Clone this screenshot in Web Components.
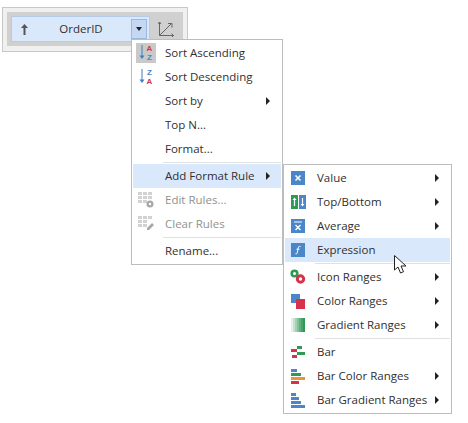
<!DOCTYPE html>
<html>
<head>
<meta charset="utf-8">
<title>Add Format Rule</title>
<style>
  html, body { margin: 0; height: 423px; background: #fff; overflow: hidden; }
  body { font: 11.5px "Open Sans", "Noto Sans", sans-serif; color: #303030; position: relative; }
  svg { display: block; }
</style>
</head>
<body>
<field-panel>OrderID</field-panel>

<popup-menu style="left:131px;top:39px;width:148px">
  <menu-row><svg slot="icon" width="20" height="20" viewBox="0 0 20 20"><rect width="20" height="20" fill="#c9c9c9"/><path d="M6 2v12" stroke="#3b7fc4" fill="none"/><path d="M3.500 12.500l2.500 3.500 2.500-3.500z" fill="#3b7fc4"/><text x="13.500" y="8" font-family="Liberation Sans" font-size="8" font-weight="700" fill="#d6334a" text-anchor="middle">A</text><text x="13.500" y="16.500" font-family="Liberation Sans" font-size="8" font-weight="700" fill="#4a86c8" text-anchor="middle">Z</text></svg>Sort Ascending</menu-row>
  <menu-row><svg slot="icon" width="20" height="20" viewBox="0 0 20 20"><path d="M6 2v12" stroke="#3b7fc4" fill="none"/><path d="M3.500 12.500l2.500 3.500 2.500-3.500z" fill="#3b7fc4"/><text x="13.500" y="8" font-family="Liberation Sans" font-size="8" font-weight="700" fill="#4a86c8" text-anchor="middle">Z</text><text x="13.500" y="16.500" font-family="Liberation Sans" font-size="8" font-weight="700" fill="#d6334a" text-anchor="middle">A</text></svg>Sort Descending</menu-row>
  <menu-row arrow>Sort by</menu-row>
  <menu-row>Top N...</menu-row>
  <menu-row>Format...</menu-row>
  <menu-sep></menu-sep>
  <menu-row arrow active>Add Format Rule</menu-row>
  <menu-row disabled><svg slot="icon" width="16" height="16" viewBox="0 0 16 16"><path d="M0 0h4v3H0zM5 0h4v3H5zM10 0h4v3h-4zM0 4h4v3H0zM5 4h4v3H5zM10 4h4v3h-4zM0 8h4v3H0zM5 8h4v3H5z" fill="#d2d2d2"/><circle cx="12" cy="12" r="3.500" fill="#a8a8a8"/><circle cx="12" cy="12" r="1.200" fill="#fff"/></svg>Edit Rules...</menu-row>
  <menu-row disabled><svg slot="icon" width="16" height="16" viewBox="0 0 16 16"><path d="M0 0h4v3H0zM5 0h4v3H5zM10 0h4v3h-4zM0 4h4v3H0zM5 4h4v3H5zM0 8h4v3H0zM5 8h4v3H5z" fill="#d2d2d2"/><path d="M9 12l5-5 2 2-5 5H9z" fill="#a8a8a8"/></svg>Clear Rules</menu-row>
  <menu-sep></menu-sep>
  <menu-row>Rename...</menu-row>
</popup-menu>

<popup-menu style="left:283px;top:164px;width:165px">
  <menu-row arrow><svg slot="icon" width="14" height="14" viewBox="0 0 14 14"><rect width="14" height="14" fill="#4a86c8"/><path d="M4.500 4.500l5 5M9.500 4.500l-5 5" stroke="#fff" stroke-width="1.500"/></svg>Value</menu-row>
  <menu-row arrow><svg slot="icon" width="15" height="14" viewBox="0 0 15 14"><rect width="7" height="14" fill="#2f9a55"/><rect x="8" width="7" height="14" fill="#4a86c8"/><path d="M3.500 11V4M11.500 3v7" stroke="#fff" stroke-width="1.200"/><path d="M1.500 5l2-2.500 2 2.500zM9.500 9l2 2.500 2-2.500z" fill="#fff"/></svg>Top/Bottom</menu-row>
  <menu-row arrow><svg slot="icon" width="14" height="14" viewBox="0 0 14 14"><rect width="14" height="14" fill="#4a86c8"/><path d="M3 3h8" stroke="#fff"/><path d="M4.500 6l5 5M9.500 6l-5 5" stroke="#fff" stroke-width="1.400"/></svg>Average</menu-row>
  <menu-row class="hot"><svg slot="icon" width="14" height="14" viewBox="0 0 14 14"><rect width="14" height="14" fill="#4a86c8"/><path d="M9.500 3.500C8 3 7.500 3.500 7.200 5L6.200 10c-.3 1-1 1-1.800.7M5.500 6.200h3" stroke="#fff" fill="none"/></svg>Expression</menu-row>
  <menu-sep></menu-sep>
  <menu-row arrow><svg slot="icon" width="16" height="16" viewBox="0 0 16 16"><circle cx="4.500" cy="4.500" r="2.800" fill="none" stroke="#2f9a55" stroke-width="2.600"/><circle cx="10.500" cy="10" r="3.200" fill="none" stroke="#d6334a" stroke-width="3"/></svg>Icon Ranges</menu-row>
  <menu-row arrow><svg slot="icon" width="14" height="15" viewBox="0 0 14 15"><rect width="9" height="9" fill="#4a86c8"/><rect x="5" y="5" width="9" height="10" fill="#d6334a"/></svg>Color Ranges</menu-row>
  <menu-row arrow><svg slot="icon" width="14" height="14" viewBox="0 0 14 14"><path d="M0 0h2v14H0z" fill="#e4f1e8"/><path d="M2 0h2v14H2z" fill="#c6e2cf"/><path d="M4 0h2v14H4z" fill="#a4d1b3"/><path d="M6 0h2v14H6z" fill="#84c09a"/><path d="M8 0h2v14H8z" fill="#62b07e"/><path d="M10 0h2v14h-2z" fill="#46a268"/><path d="M12 0h2v14h-2z" fill="#2f9a55"/></svg>Gradient Ranges</menu-row>
  <menu-sep></menu-sep>
  <menu-row><svg slot="icon" width="14" height="13" viewBox="0 0 14 13"><rect x="6" width="5" height="3" fill="#2f9a55"/><rect y="3" width="6" height="3" fill="#d6334a"/><rect x="6" y="6" width="8" height="3" fill="#2f9a55"/><rect x="1" y="9" width="5" height="3" fill="#d6334a"/></svg>Bar</menu-row>
  <menu-row arrow><svg slot="icon" width="14" height="15" viewBox="0 0 14 15"><rect width="6" height="3" fill="#4a86c8"/><rect y="4" width="10" height="3" fill="#2f9a55"/><rect y="8" width="14" height="3" fill="#ec9434"/><rect y="12" width="8" height="3" fill="#d6334a"/></svg>Bar Color Ranges</menu-row>
  <menu-row arrow><svg slot="icon" width="14" height="15" viewBox="0 0 14 15"><rect width="5" height="3" fill="#4a86c8"/><rect y="4" width="8" height="3" fill="#4a86c8"/><rect y="8" width="10" height="3" fill="#4a86c8"/><rect y="12" width="14" height="3" fill="#4a86c8"/></svg>Bar Gradient Ranges</menu-row>
</popup-menu>

<mouse-pointer></mouse-pointer>

<script>
class FieldPanel extends HTMLElement {
  constructor() {
    super()
    this.attachShadow({ mode: "open" })
    this.shadowRoot.innerHTML = `
      <style>
        :host { display: block; width: 186px; height: 45px; margin: 7px 0 0 2px; box-sizing: border-box;
                border: 1px solid #c8c8c8; background: #f0f0f0; padding: 4px; }
        .bar { display: flex; align-items: center; height: 34px; box-sizing: border-box; padding: 4px 0 4px 4px; background: #d0d0d0; }
        .pill { display: flex; align-items: center; width: 139px; height: 26px; box-sizing: border-box;
                border: 1px solid #b5cbea; background: #dae8fc; }
        .up { width: 22px; display: flex; justify-content: center; margin-left: 1px; }
        .name { flex: 1; text-align: center; padding: 0 4px 1px 0; }
        .drop { display: flex; align-items: center; justify-content: center; width: 16px; height: 20px; margin-right: 2px;
                box-sizing: border-box; border: 1px solid #9db8de; background: #c5d8f3; }
        .drop i { border: 3.500px solid transparent; border-top: 4px solid #222; border-bottom: 0; }
        .chart { margin-left: 8px; }
      </style>
      <div class="bar">
        <div class="pill">
          <span class="up"><svg width="7" height="11" viewBox="0 0 7 11" style="display:block"><path d="M3.500 0L7 4H4.500V11H2.500V4H0z" fill="#555"/></svg></span>
          <span class="name"><slot></slot></span>
          <span class="drop"><i></i></span>
        </div>
        <svg class="chart" width="16" height="16" viewBox="0 0 16 16"><path d="M1.500 1v13.500H16M1.500 14.500L13 3" fill="none" stroke="#666"/><path d="M10 2.500h4v4M0 3l1.500-2 1.500 2M13.500 12.500l2 2-2 2" fill="none" stroke="#666"/></svg>
      </div>`
  }
}

class PopupMenu extends HTMLElement {
  constructor() {
    super()
    this.attachShadow({ mode: "open" })
    this.shadowRoot.innerHTML = `
      <style>
        :host { display: block; position: absolute; background: #fff; border: 1px solid #bdbdbd; padding: 1px; }
      </style>
      <slot></slot>`
  }
}

class MenuRow extends HTMLElement {
  constructor() {
    super()
    this.attachShadow({ mode: "open" })
    this.shadowRoot.innerHTML = `
      <style>
        :host { display: flex; align-items: center; height: 24px; white-space: nowrap; }
        :host([active]), :host(.hot) { background: #dae8fc; }
        :host([disabled]) { color: #919191; }
        .icon { width: 26px; margin-right: 6px; display: flex; justify-content: center; flex: none; }
        .text { flex: 1; padding-bottom: 1px; }
        .arrow { display: none; margin-right: 11px; border: 4px solid transparent; border-left: 4px solid #222; border-right: 0; }
        :host([arrow]) .arrow { display: block; }
      </style>
      <span class="icon"><slot name="icon"></slot></span>
      <span class="text"><slot></slot></span>
      <i class="arrow"></i>`
  }
}

class MenuSep extends HTMLElement {
  constructor() {
    super()
    this.attachShadow({ mode: "open" })
    this.shadowRoot.innerHTML = `
      <style>
        :host { display: block; height: 3px; padding-top: 1px; box-sizing: border-box; margin-left: 30px; }
        div { height: 1px; background: #e0e0e0; }
      </style>
      <div></div>`
  }
}

class MousePointer extends HTMLElement {
  constructor() {
    super()
    this.attachShadow({ mode: "open" })
    this.shadowRoot.innerHTML = `
      <style>
        :host { display: block; position: absolute; left: 394px; top: 255px; width: 13px; height: 19px; }
      </style>
      <svg width="13" height="19" viewBox="0 0 13 19"><path d="M.5.500v14.500l3.500-3 2.500 6 3-1.300-2.500-5.700h5z" fill="#fff" stroke="#222"/></svg>`
  }
}

customElements.define("field-panel", FieldPanel)
customElements.define("popup-menu", PopupMenu)
customElements.define("menu-row", MenuRow)
customElements.define("menu-sep", MenuSep)
customElements.define("mouse-pointer", MousePointer)
</script>
</body>
</html>
